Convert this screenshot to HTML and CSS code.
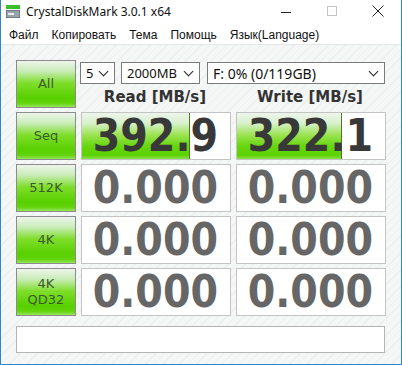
FILE: index.html
```html
<!DOCTYPE html>
<html lang="ru">
<head>
    <meta charset="UTF-8">
    <title>CrystalDiskMark 3.0.1 x64</title>
    <link rel="stylesheet" href="styles.css">
</head>
<body>
    <div class="window">
        <div class="titlebar">
            <svg class="app-icon" width="16" height="16" viewBox="0 0 16 16">
                <rect x="1" y="1" width="14" height="4" fill="#3cbf2a"/>
                <rect x="1" y="6" width="14" height="8" fill="#6f7a80"/>
                <rect x="2" y="7" width="12" height="6" fill="#9aa4aa"/>
                <rect x="3" y="9" width="6" height="2" fill="#e8ecee"/>
            </svg>
            <span class="title">CrystalDiskMark 3.0.1 x64</span>
            <div class="controls">
                <svg width="46" height="23" viewBox="0 0 46 23"><line x1="18" y1="12.5" x2="28" y2="12.5" stroke="#222" stroke-width="1"/></svg>
                <svg width="46" height="23" viewBox="0 0 46 23"><rect x="18.5" y="6.5" width="9" height="9" fill="none" stroke="#c4c4c4" stroke-width="1"/></svg>
                <svg width="46" height="23" viewBox="0 0 46 23"><path d="M17.5 5.5 L28.5 16.5 M28.5 5.5 L17.5 16.5" stroke="#222" stroke-width="1"/></svg>
            </div>
        </div>
        <div class="menubar">
            <span>Файл</span>
            <span>Копировать</span>
            <span>Тема</span>
            <span>Помощь</span>
            <span>Язык(Language)</span>
        </div>

        <div class="main">
            <div class="board">
                <button class="test-btn">All</button>
                <div class="top-area">
                    <div class="selects">
                        <div class="combo combo-count"><span>5</span><i class="chev"></i></div>
                        <div class="combo combo-size"><span>2000MB</span><i class="chev"></i></div>
                        <div class="combo combo-drive"><span>F: 0% (0/119GB)</span><i class="chev"></i></div>
                    </div>
                    <div class="heads">
                        <div class="head">Read [MB/s]</div>
                        <div class="head">Write [MB/s]</div>
                    </div>
                </div>

                <button class="test-btn">Seq</button>
                <div class="cell active"><div class="bar" style="width: 72%"></div><span class="val">392.9</span></div>
                <div class="cell active"><div class="bar" style="width: 70%"></div><span class="val">322.1</span></div>

                <button class="test-btn">512K</button>
                <div class="cell"><span class="val">0.000</span></div>
                <div class="cell"><span class="val">0.000</span></div>

                <button class="test-btn">4K</button>
                <div class="cell"><span class="val">0.000</span></div>
                <div class="cell"><span class="val">0.000</span></div>

                <button class="test-btn two-line">4K<br>QD32</button>
                <div class="cell"><span class="val">0.000</span></div>
                <div class="cell"><span class="val">0.000</span></div>
            </div>
            <div class="status"></div>
        </div>
    </div>
</body>
</html>
```

FILE: styles.css
```css
/* window frame */
body {
    margin: 0;
    font-family: "Noto Sans", "Open Sans", sans-serif;
    background: #ffffff;
}

.window {
    width: 400px;
    height: 364px;
    border: 1px solid #2f86c8;
    border-top: none;
    display: flex;
    flex-direction: column;
    background-color: #f5f7f7;
    background-image: repeating-linear-gradient(135deg, #f5f7f7 0, #f5f7f7 5px, #eceff0 5px, #eceff0 6px);
}

.titlebar {
    height: 23px;
    display: flex;
    align-items: center;
    background: #ffffff;
    padding-left: 4px;
}

.app-icon {
    margin-right: 5px;
}

.title {
    font-size: 12px;
    color: #111;
    flex: 1;
}

.controls {
    display: flex;
}

.menubar {
    height: 19px;
    display: flex;
    align-items: center;
    padding: 2px 0 0 8px;
    font-family: "Liberation Sans", Arial, sans-serif;
    font-size: 12px;
    color: #111;
    background: #ffffff;
    border-bottom: 1px solid #e6e6e6;
}

.menubar span {
    margin-right: 13px;
}

/* board */
.main {
    padding: 15px 0 0 15px;
}

.board {
    display: grid;
    grid-template-columns: 60px 150px 150px;
    grid-auto-rows: 48px;
    column-gap: 5px;
    row-gap: 4px;
}

.test-btn {
    margin: 0;
    padding: 0;
    width: 60px;
    border: 1px solid #8c8c8c;
    background: linear-gradient(#eef5ec 0%, #c9ecb8 22%, #7ede2a 48%, #58d000 80%, #62d40c 92%, #9ae660 100%);
    font-family: "DejaVu Sans", sans-serif;
    font-size: 13px;
    color: #3d5a2c;
    line-height: 16px;
    cursor: pointer;
}

.top-area {
    grid-column: 2 / 4;
    display: flex;
    flex-direction: column;
    margin-left: -1px;
}

.selects {
    display: flex;
    margin-top: 2px;
    height: 22px;
}

.combo {
    height: 22px;
    box-sizing: border-box;
    border: 1px solid #7a7a7a;
    background: #ffffff;
    display: flex;
    align-items: center;
    padding: 0 5px;
    font-size: 13px;
    color: #111;
}

.combo span {
    flex: 1;
}

.chev {
    width: 6px;
    height: 6px;
    border-right: 1.6px solid #222;
    border-bottom: 1.6px solid #222;
    transform: rotate(45deg);
    margin: -4px 2px 0 0;
}

.combo-count {
    width: 35px;
}

.combo-size {
    width: 79px;
    margin-left: 6px;
}

.combo-drive {
    width: 178px;
    margin-left: 7px;
    font-size: 14px;
}

.heads {
    display: flex;
    column-gap: 5px;
    flex: 1;
    align-items: center;
    padding-top: 1px;
}

.head {
    width: 150px;
    text-align: center;
    font-family: "DejaVu Sans", sans-serif;
    font-weight: bold;
    font-size: 15px;
    color: #333;
}

.cell {
    position: relative;
    box-sizing: border-box;
    border: 1px solid #c4c4c4;
    background: #ffffff;
    display: flex;
    align-items: center;
    justify-content: flex-end;
    padding-right: 12px;
}

.bar {
    position: absolute;
    left: 0;
    top: 0;
    bottom: 0;
    border-right: 1px solid #4a7a2a;
    background: linear-gradient(#eef5ec 0%, #d8f1cc 22%, #9be350 48%, #66d60e 72%, #5cd200 92%, #8ee050 100%);
}

.val {
    position: relative;
    font-family: "DejaVu Sans Condensed", "DejaVu Sans", sans-serif;
    font-weight: bold;
    font-size: 44px;
    line-height: 46px;
    color: #666666;
}

.cell.active .val {
    color: #383838;
}

.status {
    margin-top: 10px;
    width: 369px;
    height: 27px;
    box-sizing: border-box;
    border: 1px solid #b4b4b4;
    background: #ffffff;
}
```
